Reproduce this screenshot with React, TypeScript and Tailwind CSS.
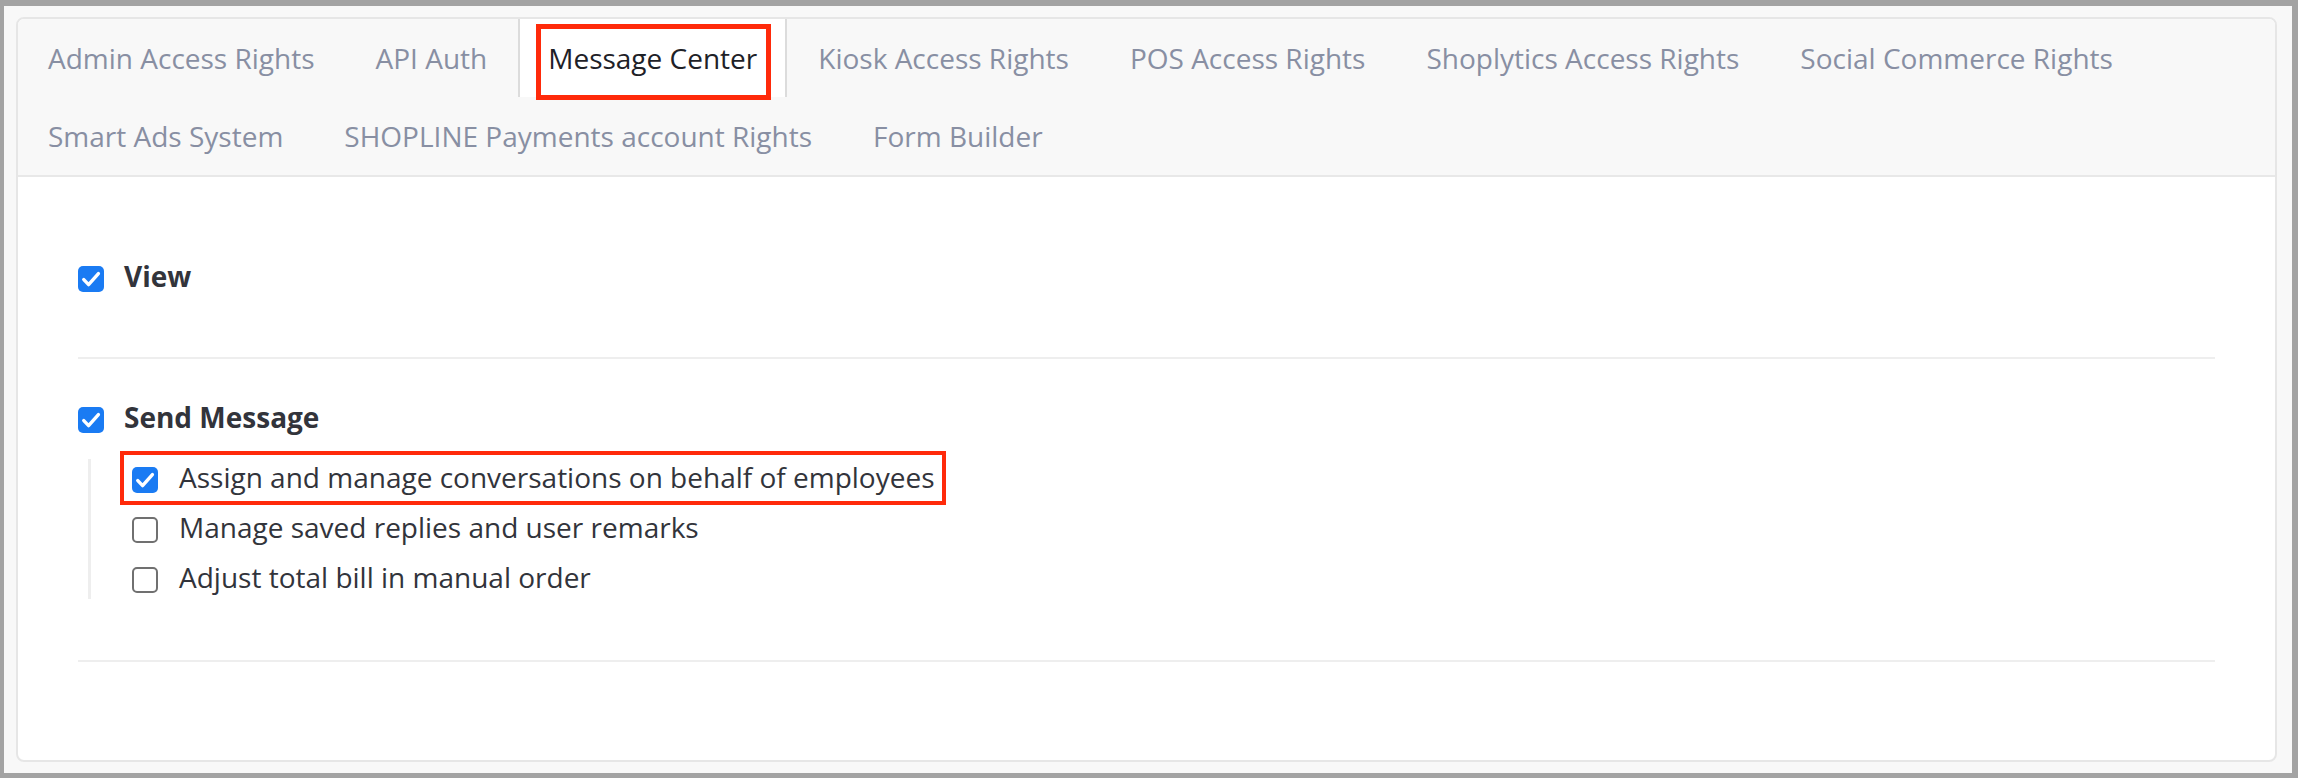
import React from 'react';

const TABS = [
  'Admin Access Rights',
  'API Auth',
  'Message Center',
  'Kiosk Access Rights',
  'POS Access Rights',
  'Shoplytics Access Rights',
  'Social Commerce Rights',
  'Smart Ads System',
  'SHOPLINE Payments account Rights',
  'Form Builder',
];

const ACTIVE = 'Message Center';

const SUB_ITEMS = [
  { label: 'Assign and manage conversations on behalf of employees', checked: true, marked: true },
  { label: 'Manage saved replies and user remarks', checked: false, marked: false },
  { label: 'Adjust total bill in manual order', checked: false, marked: false },
];

function Checkbox({ checked }: { checked: boolean }) {
  if (checked) {
    return (
      <span className="flex h-[26px] w-[26px] shrink-0 items-center justify-center rounded-[5px] bg-[#1a7bf3]">
        <svg width="26" height="26" viewBox="0 0 26 26" fill="none">
          <polyline
            points="5.8,13.6 10.6,18.6 20.4,7.6"
            stroke="#ffffff"
            strokeWidth="3.4"
            strokeLinecap="round"
            strokeLinejoin="round"
          />
        </svg>
      </span>
    );
  }
  return (
    <span className="block h-[26px] w-[26px] shrink-0 rounded-[5px] border-2 border-[#707070] bg-white" />
  );
}

function Tab({ label, active }: { label: string; active: boolean }) {
  return (
    <li
      className={`relative mr-[1px] flex h-[78px] items-center border-x-2 px-[28px] text-[28px] leading-[40px] whitespace-nowrap
                  ${active ? 'border-[#dcdcdc] bg-white text-[#1e2127]' : 'border-transparent text-[#888fa3]'}`}
    >
      {label}
      {/* red annotation box around the active tab */}
      {active && (
        <span
          aria-hidden
          className="pointer-events-none absolute -bottom-[3px] left-[16px] right-[14px] top-[5px] z-10 border-[5px] border-[#ff2a0a]"
        />
      )}
    </li>
  );
}

export default function App() {
  return (
    <div
      className="h-[778px] w-[2298px] bg-[#a3a3a3] pb-[5px] pl-[4px] pr-[6px] pt-[6px]"
      style={{ fontFamily: '"Open Sans", "Noto Sans", sans-serif' }}
    >
      <div className="flex h-full flex-col bg-[#f8f8f8] pb-[11px] pl-[12px] pr-[15px] pt-[11px]">
        <div className="flex flex-1 flex-col overflow-hidden rounded-lg border-2 border-[#e6e6e6] bg-white">
          {/* tab header */}
          <ul className="flex flex-wrap border-b-2 border-[#e8e8e8] bg-[#f8f8f8]">
            {TABS.map(t => (
              <Tab key={t} label={t} active={t === ACTIVE} />
            ))}
          </ul>

          {/* permissions */}
          <div className="flex-1 px-[60px] text-[28px] text-[#32343b]">
            <div className="border-b-2 border-[#eeeeee] pb-[58px] pt-[82px]">
              <label className="flex h-[40px] items-center gap-[20px]">
                <Checkbox checked />
                <span className="pb-[6px] font-bold leading-[26px]">View</span>
              </label>
            </div>

            <div className="border-b-2 border-[#eeeeee] pb-[61px] pt-[41px]">
              <label className="flex h-[40px] items-center gap-[20px]">
                <Checkbox checked />
                <span className="pb-[6px] font-bold leading-[26px]">Send Message</span>
              </label>

              <div className="ml-[10px] mt-[19px] flex flex-col gap-[24px] border-l-[3px] border-[#eeeeee] pb-[6px] pl-[41px] pt-[8px]">
                {SUB_ITEMS.map(item => (
                  <div key={item.label} className="flex">
                    <label className="relative inline-flex h-[26px] items-center gap-[21px]">
                      <Checkbox checked={item.checked} />
                      <span className="pb-[6px] leading-[26px] whitespace-nowrap">{item.label}</span>
                      {item.marked && (
                        <span
                          aria-hidden
                          className="pointer-events-none absolute -bottom-[12px] -left-[12px] -right-[11px] -top-[16px] border-[4px] border-[#ff2a0a]"
                        />
                      )}
                    </label>
                  </div>
                ))}
              </div>
            </div>
          </div>
        </div>
      </div>
    </div>
  );
}
